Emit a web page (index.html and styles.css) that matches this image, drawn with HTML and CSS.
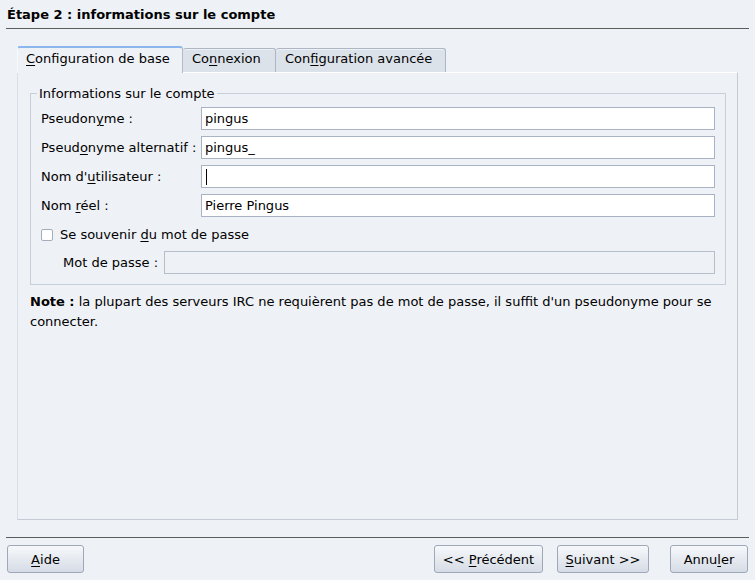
FILE: index.html
```html
<!DOCTYPE html>
<html lang="fr">
<head>
<meta charset="utf-8">
<title>Étape 2 : informations sur le compte</title>
<link rel="stylesheet" href="styles.css">
</head>
<body>
<header class="header">
  <h1 class="title">Étape 2 : informations sur le compte</h1>
</header>
<div class="tabs">
  <div class="tab tab-active tab-1"><u>C</u>onfiguration de base</div>
  <div class="tab tab-2">Co<u>n</u>nexion</div>
  <div class="tab tab-3">Con<u>f</u>iguration avancée</div>
</div>
<main class="panel">
  <fieldset class="group">
    <legend class="legend">Informations sur le compte</legend>
    <div class="form-grid">
      <label class="label">Pseudon<u>y</u>me :</label>
      <div class="field">pingus</div>
      <label class="label">Pseud<u>o</u>nyme alternatif :</label>
      <div class="field">pingus_</div>
      <label class="label">Nom d'<u>u</u>tilisateur :</label>
      <div class="field"><span class="caret"></span></div>
      <label class="label">Nom <u>r</u>éel :</label>
      <div class="field">Pierre Pingus</div>
    </div>
    <div class="check-row">
      <span class="checkbox"></span>
      <span class="check-label">Se souvenir <u>d</u>u mot de passe</span>
    </div>
    <div class="pass-row">
      <label class="pass-label">Mot de passe :</label>
      <div class="field field-disabled"></div>
    </div>
  </fieldset>
  <p class="note"><b>Note :</b> la plupart des serveurs IRC ne requièrent pas de mot de passe, il suffit d'un pseudonyme pour se connecter.</p>
</main>
<footer class="footer">
  <div class="buttons">
    <button class="btn btn-help"><u>A</u>ide</button>
    <span class="spacer"></span>
    <button class="btn btn-prev">&lt;&lt; <u>P</u>récédent</button>
    <button class="btn btn-next"><u>S</u>uivant &gt;&gt;</button>
    <button class="btn btn-cancel">Annu<u>l</u>er</button>
  </div>
</footer>
</body>
</html>
```
FILE: styles.css
```css
* { box-sizing: border-box; }
html, body {
  margin: 0;
  padding: 0;
}
body {
  width: 755px;
  height: 580px;
  overflow: hidden;
  background: #eef1f6;
  font-family: "DejaVu Sans", "Liberation Sans", sans-serif;
  font-size: 13px;
  line-height: 15px;
  color: #000;
  display: flex;
  flex-direction: column;
}
u { text-decoration: underline; text-underline-offset: 2px; }

.header {
  margin: 0 6px;
  padding: 7px 0 6px 1px;
  border-bottom: 1px solid #5c5c5c;
}
.title {
  margin: 0;
  font-size: 13px;
  line-height: 15px;
  font-weight: bold;
}

.tabs {
  margin-top: 17px;
  padding-left: 17px;
  display: flex;
  align-items: flex-end;
  height: 26px;
  flex: none;
}
.tab {
  white-space: nowrap;
  border: 1px solid #aeb6c3;
  border-bottom: none;
  border-radius: 3px 3px 0 0;
  background: #dce2ea;
  padding: 2px 0 6px 8px;
  box-shadow: inset 0 1px 0 #eef2f7;
}
.tab-active {
  position: relative;
  z-index: 1;
  background: #eef1f6;
  border-top: 2px solid #8cb7ec;
  border-left-color: #f7f9fc;
  border-right-color: #b3bbc7;
  padding: 3px 0 7px 8px;
  margin-bottom: -1px;
  box-shadow: none;
}
.tab-1 { width: 166px; }
.tab-2 { width: 93px; border-left: none; padding-left: 9px; }
.tab-3 { width: 170px; border-left: none; padding-left: 9px; }

.panel {
  flex: 1;
  margin: 0 17px;
  border: 1px solid #c4cbd5;
  border-top-color: #ffffff;
  border-left-color: #d9dfe7;
  padding: 13px 11px 0 12px;
}
.group {
  margin: 0;
  border: 1px solid #c6ced9;
  padding: 6px 10px 10px 10px;
}
.legend {
  margin-left: -4px;
  padding: 0 2px;
  line-height: 15px;
}
.form-grid {
  display: grid;
  grid-template-columns: 160px 1fr;
  grid-auto-rows: 23px;
  row-gap: 6px;
  align-items: center;
}
.label {
  white-space: nowrap;
}
.field {
  height: 23px;
  background: #fff;
  border: 1px solid #aab3c3;
  padding: 3px 3px;
  line-height: 15px;
  white-space: nowrap;
  display: flex;
  align-items: center;
}
.field-disabled {
  flex: 1;
  background: #eef1f6;
  border-color: #b6beca;
}
.caret {
  display: block;
  width: 1px;
  height: 16px;
  background: #000;
  margin-left: 1px;
}
.check-row {
  margin-top: 6px;
  height: 22px;
  display: flex;
  align-items: center;
}
.checkbox {
  width: 12px;
  height: 12px;
  margin-top: 2px;
  background: #fff;
  border: 1px solid #a3acbb;
  border-radius: 2px;
}
.check-label {
  margin-left: 7px;
}
.pass-row {
  margin-top: 6px;
  display: flex;
  align-items: center;
  padding-left: 22px;
}
.pass-label {
  width: 101px;
  white-space: nowrap;
}
.note {
  margin: 7px 0 0 0;
  line-height: 20px;
}

.footer {
  flex: none;
  margin-top: 17px;
}
.buttons {
  margin: 0 6px;
  border-top: 1px solid #5c5c5c;
  padding: 7px 1px;
  display: flex;
  align-items: center;
}
.spacer { flex: 1; }
.btn {
  height: 28px;
  font-family: "DejaVu Sans", "Liberation Sans", sans-serif;
  font-size: 13px;
  line-height: 15px;
  color: #000;
  border: 1px solid #9fa8b7;
  border-radius: 3px;
  background: linear-gradient(#f6f8fb, #e6eaf0 50%, #d6dce6);
  padding: 0;
  white-space: nowrap;
}
.btn-help { width: 77px; }
.btn-prev { width: 109px; }
.btn-next { width: 92px; margin-left: 14px; }
.btn-cancel { width: 78px; margin-left: 21px; }
```
